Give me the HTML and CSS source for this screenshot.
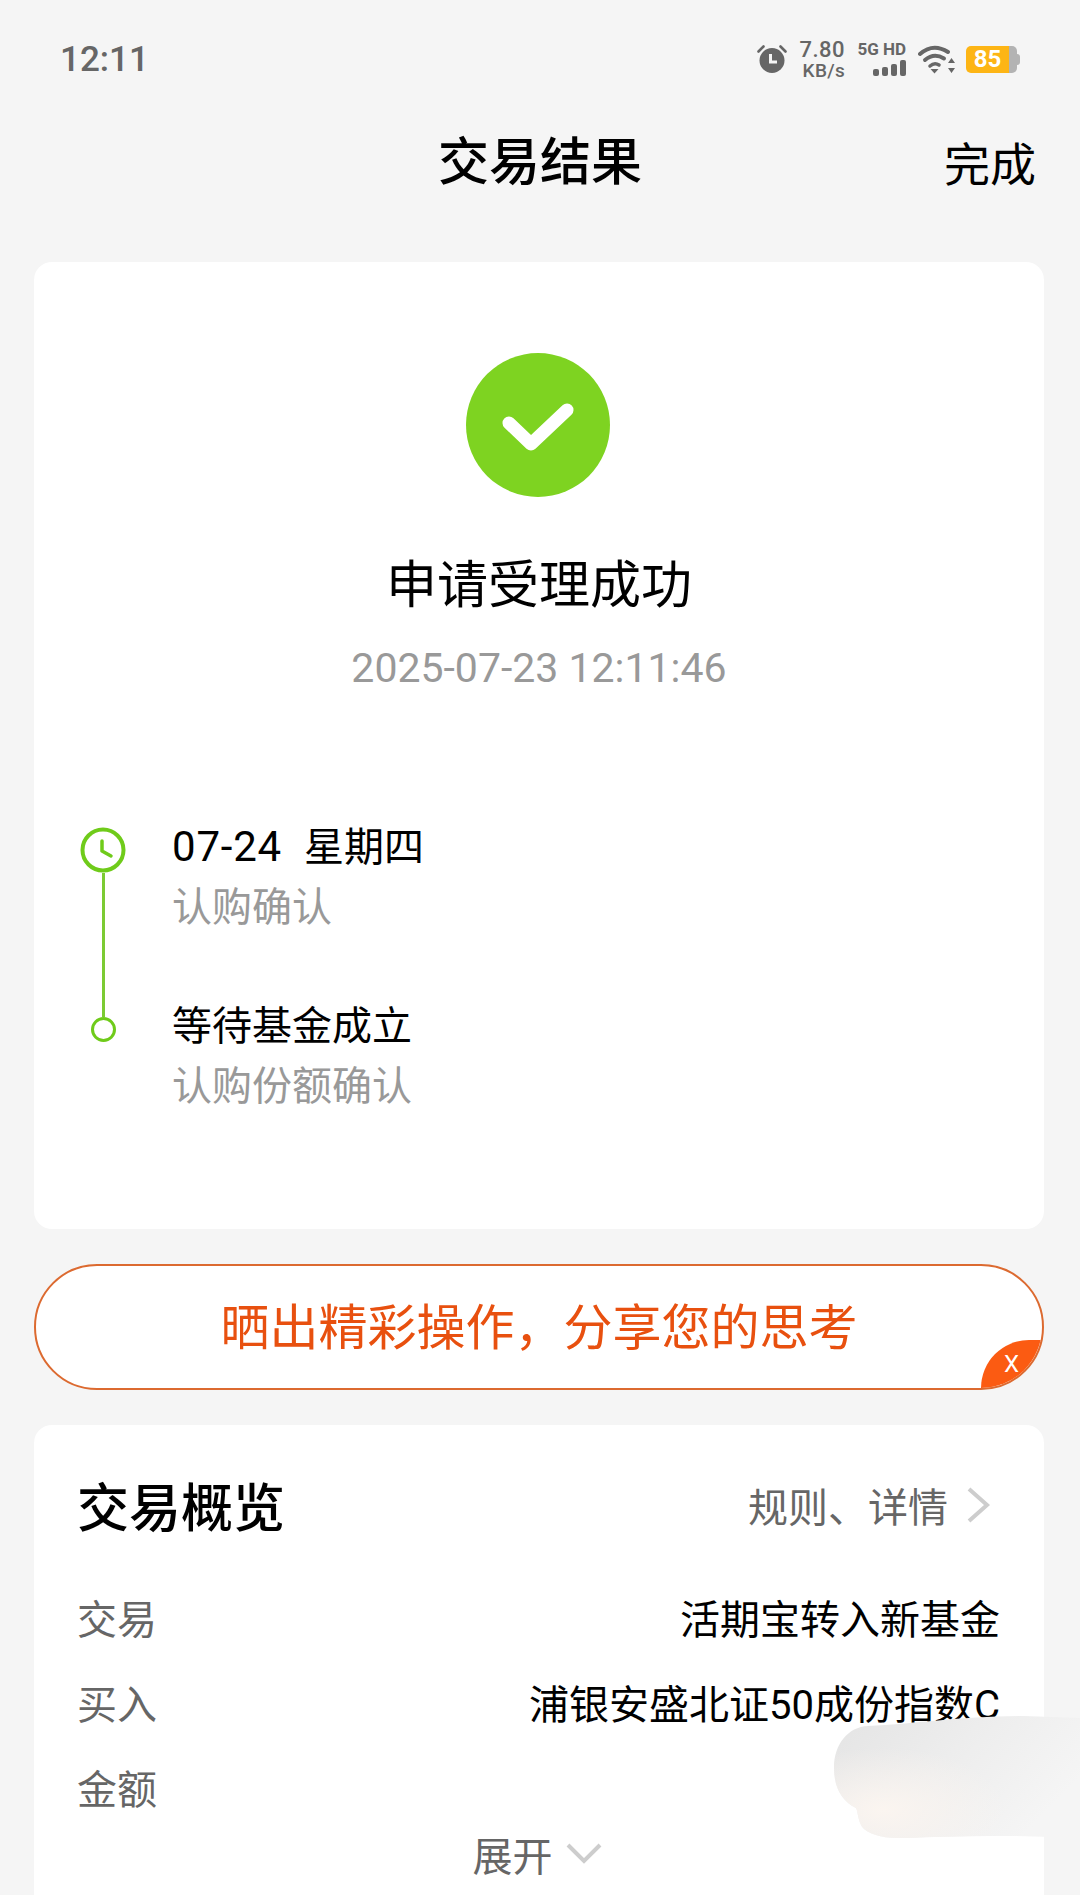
FILE: index.html
```html
<!DOCTYPE html>
<html lang="zh-CN">
<head>
  <meta charset="UTF-8">
  <meta name="viewport" content="width=device-width, initial-scale=1.0">
  <title>交易结果</title>
  <link rel="stylesheet" href="styles.css">
</head>
<body>
  <!-- Status bar -->
  <div class="status-bar">
    <span class="clock">12:11</span>
    <div class="status-icons">
      <svg class="alarm-icon" width="30" height="30" viewBox="0 0 30 30">
        <circle cx="15" cy="16.5" r="12.5" fill="#666"/>
        <path d="M1.5 7.5 L6.5 2.5 M28.5 7.5 L23.5 2.5" stroke="#666" stroke-width="2.6" stroke-linecap="round"/>
        <path d="M13.5 10 V18 H20" fill="none" stroke="#f5f5f5" stroke-width="3"/>
      </svg>
      <div class="speed">
        <span class="speed-value">7.80</span>
        <span class="speed-unit">KB/s</span>
      </div>
      <div class="signal">
        <span class="signal-label">5G HD</span>
        <div class="signal-bars">
          <i class="bar-1"></i><i class="bar-2"></i><i class="bar-3"></i><i class="bar-4"></i>
        </div>
      </div>
      <svg class="wifi-icon" width="38" height="30" viewBox="0 0 38 30">
        <path d="M2 10 Q15 -1.500 30 8" fill="none" stroke="#666" stroke-width="4" stroke-linecap="round"/>
        <path d="M7 16 Q16 8.500 26 14.500" fill="none" stroke="#666" stroke-width="4" stroke-linecap="round"/>
        <path d="M12 22 Q16.500 18 21 21" fill="none" stroke="#666" stroke-width="3.500" stroke-linecap="round"/>
        <path d="M12.500 25 L20.500 25 L16.500 29.500 Z" fill="#666"/>
        <path d="M33.500 14 L37 19 H30 Z M33.500 29 L30 24 H37 Z" fill="#666"/>
      </svg>
      <div class="battery">
        <div class="battery-body">
          <span class="battery-level">85</span>
        </div>
        <span class="battery-nub"></span>
      </div>
    </div>
  </div>

  <!-- Title bar -->
  <div class="nav-bar">
    <span></span>
    <h1 class="nav-title">交易结果</h1>
    <span class="nav-done">完成</span>
  </div>

  <!-- Result card -->
  <div class="card result-card">
    <svg class="success-icon" width="144" height="144" viewBox="0 0 144 144">
      <circle cx="72" cy="72" r="72" fill="#7ed321"/>
      <path d="M43 70 L65 91 L101 57" fill="none" stroke="#fff" stroke-width="13" stroke-linecap="round" stroke-linejoin="round"/>
    </svg>
    <div class="result-title">申请受理成功</div>
    <div class="result-time">2025-07-23 12:11:46</div>

    <div class="timeline">
      <div class="step step-first">
        <div class="step-marker">
          <svg width="46" height="46" viewBox="0 0 46 46">
            <circle cx="23" cy="23" r="20.500" fill="none" stroke="#6fcb1a" stroke-width="4"/>
            <path d="M22 14 V24 L31 29" fill="none" stroke="#6fcb1a" stroke-width="3.500" stroke-linecap="round" stroke-linejoin="round"/>
          </svg>
          <span class="step-line"></span>
        </div>
        <div class="step-text">
          <div class="step-title"><span class="step-date">07-24</span><span class="step-week">星期四</span></div>
          <div class="step-sub">认购确认</div>
        </div>
      </div>
      <div class="step">
        <div class="step-marker">
          <span class="step-line step-line-end"></span>
          <span class="step-dot"></span>
        </div>
        <div class="step-text">
          <div class="step-title">等待基金成立</div>
          <div class="step-sub">认购份额确认</div>
        </div>
      </div>
    </div>
  </div>

  <!-- Share banner -->
  <div class="share-banner">
    <span class="share-text">晒出精彩操作，分享您的思考</span>
    <span class="share-close">X</span>
  </div>

  <!-- Overview card -->
  <div class="card overview-card">
    <div class="overview-head">
      <h2 class="overview-title">交易概览</h2>
      <div class="overview-link">
        <span>规则、详情</span>
        <svg width="26" height="38" viewBox="0 0 26 38">
          <path d="M3 3 L21 19 L3 35" fill="none" stroke="#cdcdcd" stroke-width="4"/>
        </svg>
      </div>
    </div>
    <div class="overview-row">
      <span class="row-label">交易</span>
      <span class="row-value">活期宝转入新基金</span>
    </div>
    <div class="overview-row">
      <span class="row-label">买入</span>
      <span class="row-value">浦银安盛北证50成份指数C</span>
    </div>
    <div class="overview-row">
      <span class="row-label">金额</span>
    </div>
    <div class="expand">
      <span>展开</span>
      <svg width="38" height="24" viewBox="0 0 38 24">
        <path d="M3 3 L19 19 L35 3" fill="none" stroke="#cdcdcd" stroke-width="4"/>
      </svg>
    </div>
  </div>

  <!-- Smudge painted over the amount -->
  <svg class="smudge" width="246" height="125" viewBox="0 0 246 125">
    <defs>
      <linearGradient id="smudgeFill" x1="0" y1="0" x2="1" y2="0.500">
        <stop offset="0" stop-color="#e4e4e4"/>
        <stop offset="0.500" stop-color="#ededed"/>
        <stop offset="1" stop-color="#f5f5f5"/>
      </linearGradient>
      <radialGradient id="smudgeWarm" cx="0.200" cy="0.750" r="0.500">
        <stop offset="0" stop-color="#fbf5f0"/>
        <stop offset="1" stop-color="#fbf5f0" stop-opacity="0"/>
      </radialGradient>
    </defs>
    <path d="M0 52 C0 28 14 11 34 10 C80 8 130 0 190 0 L246 2 V125 C210 118 160 120 100 121 C70 122 45 125 30 113 C24 108 24 95 22 92 C8 85 0 72 0 52 Z" fill="url(#smudgeFill)"/>
    <path d="M0 52 C0 28 14 11 34 10 C80 8 130 0 190 0 L246 2 V125 C210 118 160 120 100 121 C70 122 45 125 30 113 C24 108 24 95 22 92 C8 85 0 72 0 52 Z" fill="url(#smudgeWarm)"/>
  </svg>
</body>
</html>
```

FILE: styles.css
```css
* {
  box-sizing: border-box;
}

html, body {
  margin: 0;
  padding: 0;
}

body {
  position: relative;
  width: 1080px;
  height: 1895px;
  overflow: hidden;
  background-color: #f5f5f5;
  color: #000;
  font-family: Roboto, "Noto Sans CJK SC", sans-serif;
}

/* Status bar */
.status-bar {
  display: flex;
  justify-content: space-between;
  align-items: center;
  height: 118px;
  padding: 0 60px;
  color: #666;
}

.clock {
  font-size: 35px;
  font-weight: 500;
}

.status-icons {
  display: flex;
  align-items: center;
}

.speed {
  display: flex;
  flex-direction: column;
  align-items: flex-end;
  width: 46px;
  margin-left: 12px;
  font-weight: 500;
  line-height: 1;
}

.speed-value {
  font-size: 22px;
  letter-spacing: 0.5px;
}

.speed-unit {
  font-size: 19px;
  letter-spacing: 0.3px;
}

.signal {
  display: flex;
  flex-direction: column;
  align-items: flex-end;
  width: 48px;
  margin-left: 13px;
}

.signal-label {
  font-size: 17px;
  font-weight: 700;
  line-height: 14px;
  white-space: nowrap;
}

.signal-bars {
  display: flex;
  align-items: flex-end;
  gap: 3px;
  height: 16px;
  margin-top: 4px;
}

.signal-bars i {
  display: block;
  width: 6px;
  background-color: #666;
  border-radius: 2px;
}

.bar-1 { height: 7px; }
.bar-2 { height: 9px; }
.bar-3 { height: 12px; }
.bar-4 { height: 16px; }

.wifi-icon {
  margin-left: 12px;
}

.battery {
  display: flex;
  align-items: center;
  margin-left: 10px;
}

.battery-body {
  width: 51px;
  height: 27px;
  border-radius: 5px;
  background: linear-gradient(to right, #fdb515 0 43px, #b3b3b3 43px);
  overflow: hidden;
}

.battery-level {
  display: block;
  width: 43px;
  color: #fff;
  font-size: 24px;
  font-weight: 700;
  line-height: 27px;
  text-align: center;
}

.battery-nub {
  width: 3px;
  height: 11px;
  background-color: #b3b3b3;
  border-radius: 0 3px 3px 0;
}

/* Title bar */
.nav-bar {
  display: grid;
  grid-template-columns: 1fr auto 1fr;
  align-items: center;
  height: 70px;
  margin-top: 6px;
}

.nav-title {
  margin: 4px 0 0;
  font-size: 51px;
  font-weight: 500;
  line-height: 70px;
}

.nav-done {
  padding-right: 44px;
  font-size: 46px;
  text-align: right;
}

/* Cards */
.card {
  width: 1010px;
  margin-left: 34px;
  background-color: #fff;
  border-radius: 18px;
}

.result-card {
  display: flex;
  flex-direction: column;
  align-items: center;
  height: 967px;
  margin-top: 68px;
  padding-top: 91px;
}

.success-icon {
  display: block;
  margin-right: 2px;
}

.result-title {
  margin-top: 54px;
  font-size: 51px;
  line-height: 70px;
}

.result-time {
  margin-top: 22px;
  color: #999;
  font-size: 41px;
  line-height: 50px;
}

/* Timeline */
.timeline {
  align-self: stretch;
  margin-top: 124px;
  padding-left: 46px;
}

.step {
  display: flex;
  gap: 46px;
}

.step-first {
  height: 180px;
}

.step-marker {
  display: flex;
  flex-direction: column;
  align-items: center;
  width: 46px;
}

.step-first .step-marker {
  padding-top: 10px;
}

.step-marker svg {
  flex: none;
  display: block;
}

.step-line {
  flex: 1;
  width: 3px;
  background-color: #7ccb33;
}

.step-line-end {
  flex: none;
  height: 20px;
}

.step-dot {
  width: 25px;
  height: 25px;
  border: 3px solid #6fcb1a;
  border-radius: 50%;
}

.step-title {
  font-size: 40px;
  line-height: 60px;
}

.step-date {
  font-size: 42px;
  letter-spacing: 0.8px;
}

.step-week {
  margin-left: 22px;
}

.step-sub {
  color: #999;
  font-size: 40px;
  line-height: 60px;
}

/* Share banner */
.share-banner {
  position: relative;
  display: flex;
  justify-content: center;
  align-items: center;
  width: 1010px;
  height: 126px;
  margin: 35px 0 0 34px;
  padding-bottom: 8px;
  background-color: #fff;
  border: 2px solid #dc6a30;
  border-radius: 63px;
  color: #e8500f;
  font-size: 49px;
  overflow: hidden;
}

.share-close {
  position: absolute;
  right: 0;
  bottom: 0;
  width: 61px;
  height: 48px;
  background-color: #fb5b12;
  border-radius: 48px 0 48px 0;
  color: #fff;
  font-size: 24px;
  line-height: 48px;
  text-align: center;
}

/* Overview card */
.overview-card {
  height: 520px;
  margin-top: 35px;
  padding: 0 44px 0 43px;
}

.overview-head {
  display: flex;
  justify-content: space-between;
  align-items: center;
  height: 159px;
  margin-bottom: -10px;
}

.overview-title {
  margin: 0;
  font-size: 52px;
  font-weight: 500;
}

.overview-link {
  display: flex;
  align-items: center;
  gap: 18px;
  margin-right: 8px;
  color: #666;
  font-size: 40px;
}

.overview-link svg {
  display: block;
}

.overview-row {
  display: flex;
  justify-content: space-between;
  align-items: center;
  height: 85px;
  font-size: 40px;
}

.row-label {
  color: #666;
}

.expand {
  display: flex;
  justify-content: center;
  align-items: center;
  gap: 12px;
  height: 50px;
  padding-right: 2px;
  color: #666;
  font-size: 40px;
}

.expand svg {
  display: block;
}

/* Smudge */
.smudge {
  position: absolute;
  left: 834px;
  top: 1716px;
}
```
